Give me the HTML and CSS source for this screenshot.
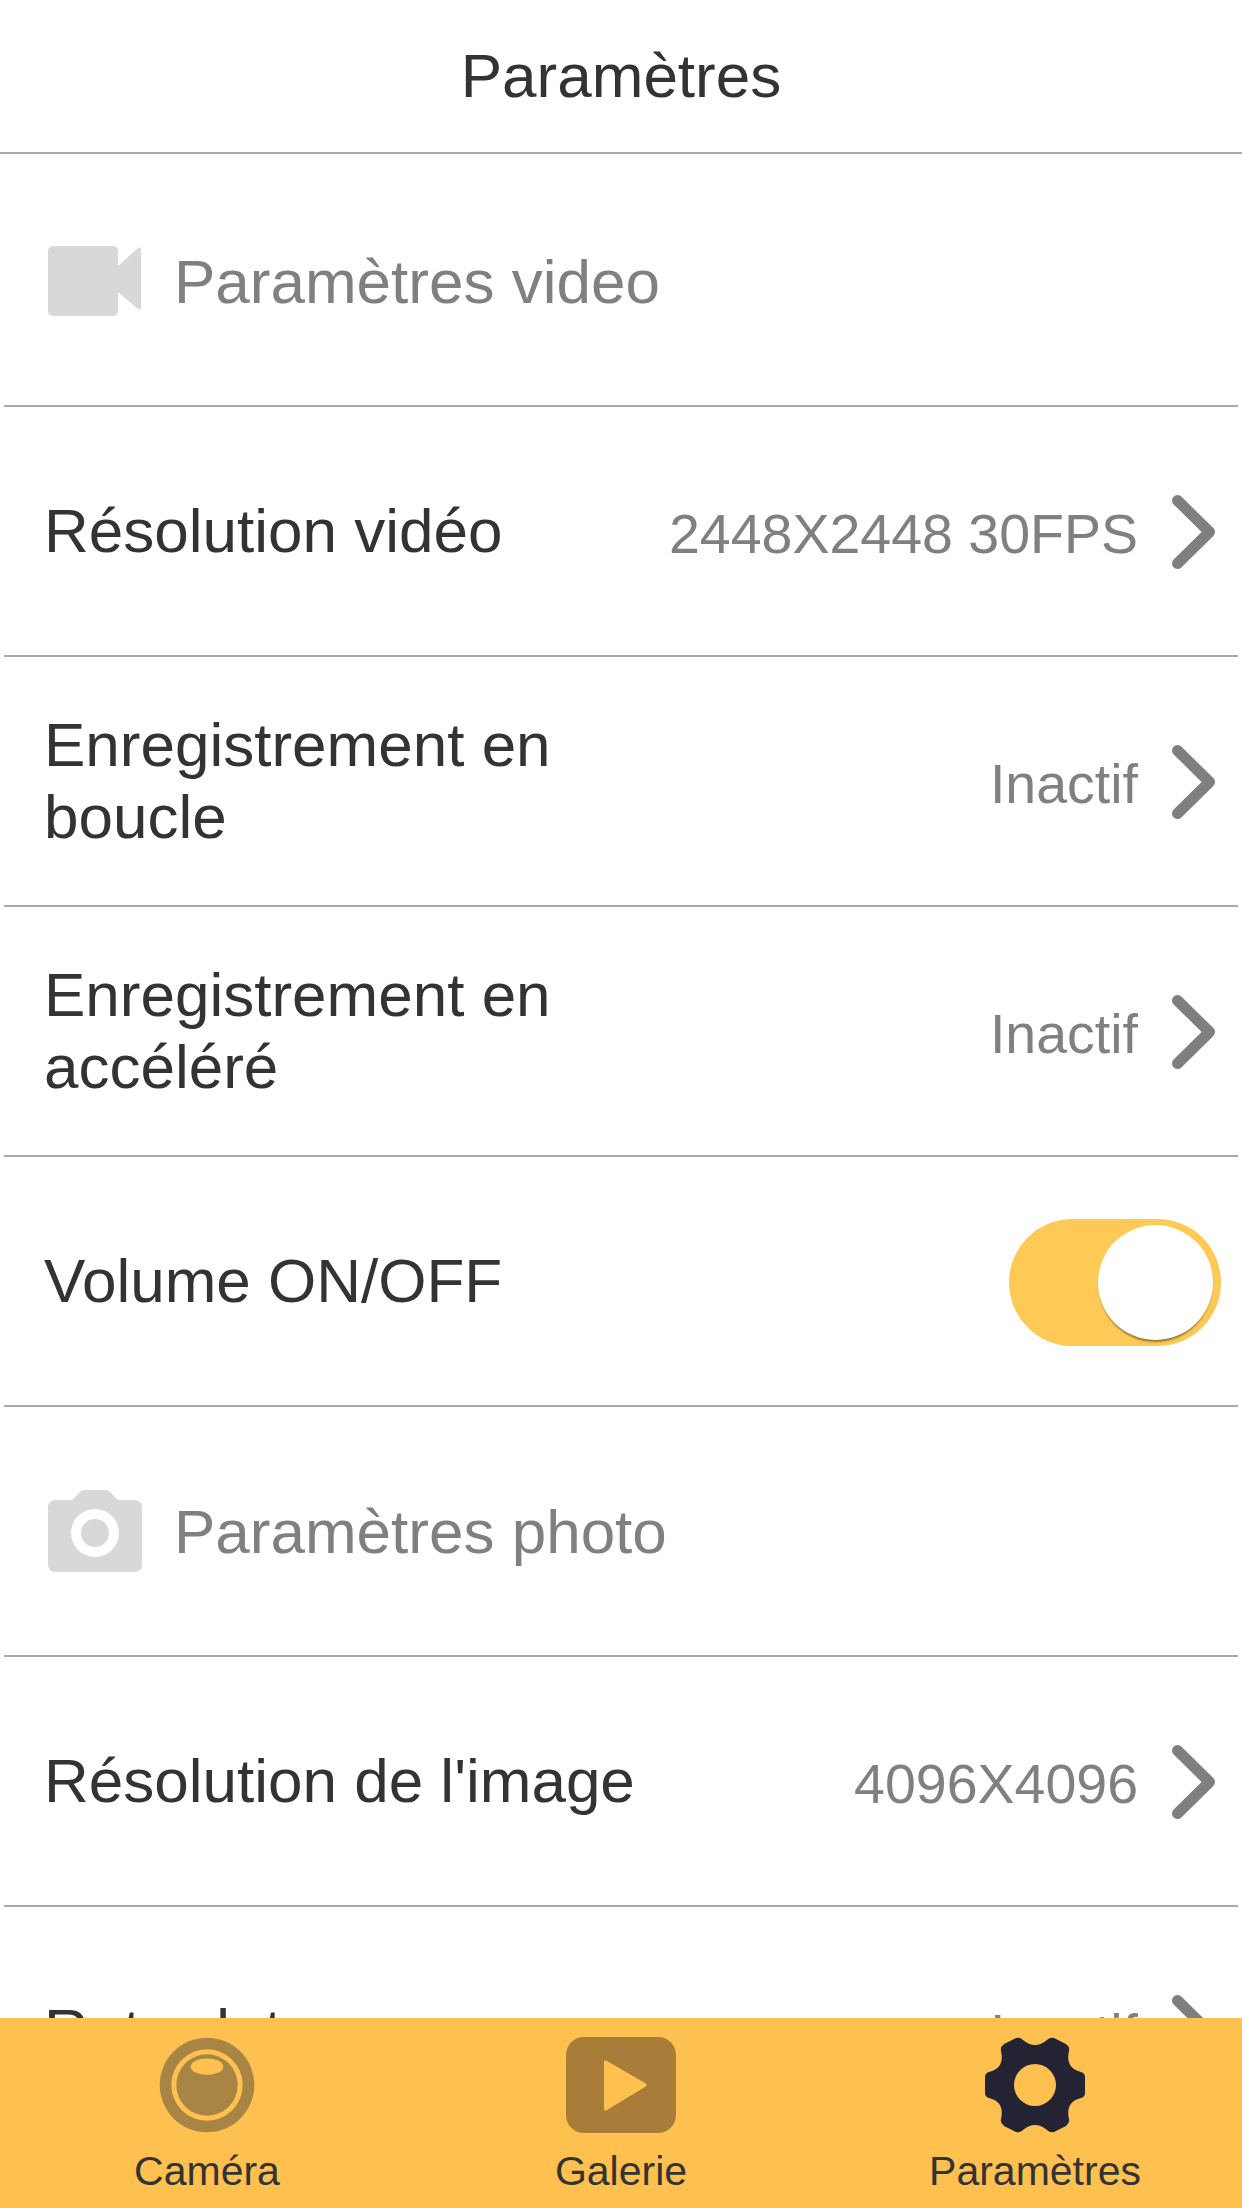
FILE: index.html
```html
<!DOCTYPE html>
<html lang="fr">

<head>
    <meta charset="UTF-8" />
    <meta name="viewport" content="width=device-width, initial-scale=1.0" />
    <title>Paramètres</title>
    <link rel="stylesheet" href="styles.css">
</head>

<body>
    <div class="app">
        <header class="top-bar">Paramètres</header>

        <main class="settings">
            <div class="row section-row">
                <svg class="section-icon" viewBox="0 0 94 70">
                    <rect x="0" y="0" width="70" height="70" rx="5" />
                    <path d="M70 20 L90 2 Q93 0 93 4 V61 Q93 65 90 63 L70 46 Z" />
                </svg>
                <span>Paramètres video</span>
            </div>

            <div class="row">
                <span class="label">Résolution vidéo</span>
                <span class="value">2448X2448 30FPS</span>
                <svg class="chevron" viewBox="0 0 44 74"><path d="M5.5 5.5 L37.5 37 L5.5 68.5" /></svg>
            </div>

            <div class="row">
                <span class="label">Enregistrement en boucle</span>
                <span class="value">Inactif</span>
                <svg class="chevron" viewBox="0 0 44 74"><path d="M5.5 5.5 L37.5 37 L5.5 68.5" /></svg>
            </div>

            <div class="row">
                <span class="label">Enregistrement en accéléré</span>
                <span class="value">Inactif</span>
                <svg class="chevron" viewBox="0 0 44 74"><path d="M5.5 5.5 L37.5 37 L5.5 68.5" /></svg>
            </div>

            <div class="row">
                <span class="label">Volume ON/OFF</span>
                <div class="toggle"><div class="knob"></div></div>
            </div>

            <div class="row section-row">
                <svg class="section-icon" viewBox="0 0 94 82">
                    <path fill-rule="evenodd" d="M8 10 H24 L32 2 Q34 0 37 0 H57 Q60 0 62 2 L70 10 H86 Q94 10 94 18 V74 Q94 82 86 82 H8 Q0 82 0 74 V18 Q0 10 8 10 Z M47 19 A24 24 0 1 0 47 67 A24 24 0 1 0 47 19 Z M47 29 A14 14 0 1 1 47 57 A14 14 0 1 1 47 29 Z" />
                </svg>
                <span>Paramètres photo</span>
            </div>

            <div class="row">
                <span class="label">Résolution de l'image</span>
                <span class="value">4096X4096</span>
                <svg class="chevron" viewBox="0 0 44 74"><path d="M5.5 5.5 L37.5 37 L5.5 68.5" /></svg>
            </div>

            <div class="row">
                <span class="label">Retardateur</span>
                <span class="value">Inactif</span>
                <svg class="chevron" viewBox="0 0 44 74"><path d="M5.5 5.5 L37.5 37 L5.5 68.5" /></svg>
            </div>
        </main>

        <nav class="tab-bar">
            <div class="tab">
                <svg class="tab-icon" viewBox="0 0 96 96">
                    <circle cx="48" cy="48" r="47.3" fill="#a98545" />
                    <circle cx="48" cy="48" r="35.7" fill="#fec04f" />
                    <circle cx="48" cy="48" r="30.7" fill="#a98545" />
                    <ellipse cx="48" cy="29.7" rx="16.3" ry="8.3" fill="#fec04f" />
                </svg>
                <span>Caméra</span>
            </div>
            <div class="tab">
                <svg class="tab-icon" viewBox="0 0 110 96">
                    <rect x="0" y="0" width="110" height="96" rx="18" fill="#a87c39" />
                    <path d="M38 25 Q38 22 41 24 L79 46 Q82 48 79 50 L41 73 Q38 75 38 72 Z" fill="#fec04f" />
                </svg>
                <span>Galerie</span>
            </div>
            <div class="tab">
                <svg class="tab-icon" viewBox="0 0 100 96">
                    <path fill-rule="evenodd" fill="#232333" d="M38 3 Q50 13 62 3 Q65 0 69 1 L81 7 Q85 10 84 14 Q80 31 96 35 Q100 36 100 40 V56 Q100 60 96 61 Q80 65 84 82 Q85 86 81 89 L69 95 Q65 96 62 93 Q50 83 38 93 Q35 96 31 95 L19 89 Q15 86 16 82 Q20 65 4 61 Q0 60 0 56 V40 Q0 36 4 35 Q20 31 16 14 Q15 10 19 7 L31 1 Q35 0 38 3 Z M50 27 A20.5 20.5 0 1 0 50 69 A20.5 20.5 0 1 0 50 27 Z" />
                </svg>
                <span>Paramètres</span>
            </div>
        </nav>
    </div>
</body>

</html>
```
FILE: styles.css
```css
body {
    font-family: 'Liberation Sans', Arial, sans-serif;
    margin: 0;
    padding: 0;
    background-color: #ffffff;
    color: #333;
}

.app {
    display: flex;
    flex-direction: column;
    height: 2208px;
    overflow: hidden;
}

.top-bar {
    flex: none;
    height: 152px;
    line-height: 152px;
    text-align: center;
    font-size: 62px;
    border-bottom: 2px solid #aaa;
}

.settings {
    flex: 1;
    min-height: 0;
    overflow: hidden;
    padding-top: 3px;
}

.row {
    display: flex;
    align-items: center;
    box-sizing: border-box;
    height: 250px;
    margin: 0 4px;
    padding-left: 40px;
    padding-right: 22px;
    border-bottom: 2px solid #aaa;
    font-size: 62px;
}

.section-row {
    color: #808080;
    gap: 32px;
    padding-left: 44px;
}

.section-icon {
    width: 94px;
    flex: none;
    fill: #d8d8d8;
}

.label {
    flex: 1;
    max-width: 600px;
    line-height: 72px;
}

.value {
    margin-left: auto;
    margin-top: 5px;
    font-size: 55.5px;
    color: #808080;
}

.chevron {
    flex: none;
    width: 44px;
    height: 74px;
    margin-left: 34px;
    margin-top: 2px;
    fill: none;
    stroke: #7f7f7f;
    stroke-width: 11;
    stroke-linecap: round;
    stroke-linejoin: round;
}

/* the knob sits at the right end, track is always on in this screen */
.toggle {
    display: flex;
    justify-content: flex-end;
    align-items: center;
    flex: none;
    box-sizing: border-box;
    width: 212px;
    height: 127px;
    margin-left: auto;
    margin-right: -5px;
    margin-top: 2px;
    padding-right: 8px;
    border-radius: 64px;
    background-color: #fec955;
}

.knob {
    width: 115px;
    height: 115px;
    border-radius: 50%;
    background-color: #fff;
    box-shadow: 0 3px 2px -1px rgba(90, 70, 20, 0.6);
}

.tab-bar {
    flex: none;
    display: flex;
    height: 190px;
    background-color: #fec04f;
}

.tab {
    flex: 1;
    display: flex;
    flex-direction: column;
    align-items: center;
    padding-top: 19px;
    font-size: 41px;
    line-height: 48px;
    color: #333;
}

.tab-icon {
    height: 96px;
    margin-bottom: 14px;
}
```
